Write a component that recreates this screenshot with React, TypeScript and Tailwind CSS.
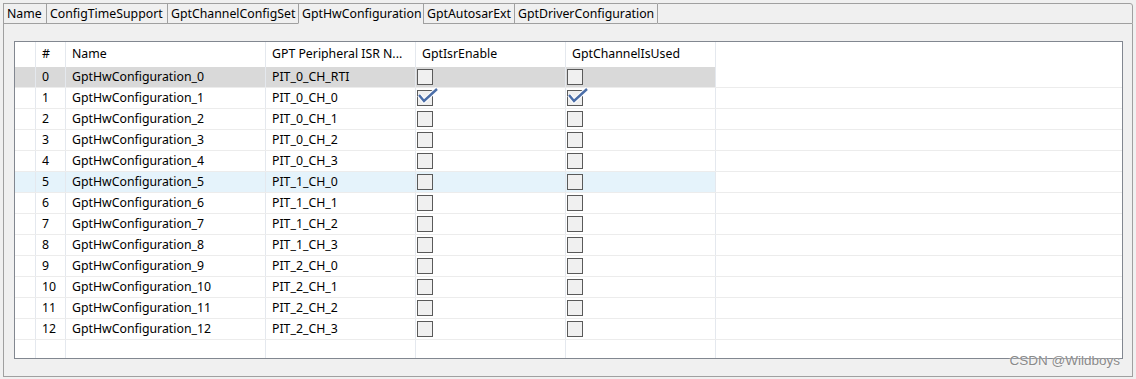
import React from 'react';

type Row = {
  id: number;
  name: string;
  isr: string;
  isrEnable: boolean;
  used: boolean;
};

const tabs = [
  { label: 'Name', w: 'w-[43px]' },
  { label: 'ConfigTimeSupport', w: 'w-[121px]' },
  { label: 'GptChannelConfigSet', w: 'w-[131px]' },
  { label: 'GptHwConfiguration', w: 'w-[125px]', active: true },
  { label: 'GptAutosarExt', w: 'w-[91px]' },
  { label: 'GptDriverConfiguration', w: 'w-[143px]' },
];

const isrNames = [
  'PIT_0_CH_RTI',
  'PIT_0_CH_0',
  'PIT_0_CH_1',
  'PIT_0_CH_2',
  'PIT_0_CH_3',
  'PIT_1_CH_0',
  'PIT_1_CH_1',
  'PIT_1_CH_2',
  'PIT_1_CH_3',
  'PIT_2_CH_0',
  'PIT_2_CH_1',
  'PIT_2_CH_2',
  'PIT_2_CH_3',
];

const rows: Row[] = isrNames.map((isr, i) => ({
  id: i,
  name: `GptHwConfiguration_${i}`,
  isr,
  isrEnable: i === 1,
  used: i === 1,
}));

function CheckBox({ checked }: { checked: boolean }) {
  return (
    <div className="relative w-[16px] h-[16px] border-[1.5px] border-[#5a5a5a] bg-[#f0f0f0]">
      {checked && (
        <svg className="absolute -left-[1px] -top-[4px]" width="22" height="17" viewBox="0 0 22 17">
          <path d="M2 8 L7 14 L20 2" fill="none" stroke="#ffffff" strokeWidth="4.5" />
          <path d="M2 8 L7 14 L20 2" fill="none" stroke="#4b6ea8" strokeWidth="2.4" />
        </svg>
      )}
    </div>
  );
}

export default function App() {
  const cell = 'h-full border-r border-[#e4e8ee] flex items-center';

  return (
    <div
      className="relative w-[1136px] h-[379px] bg-[#f0f0f0] pt-[3px] px-[3px] text-[12.3px] text-black overflow-hidden"
      style={{ fontFamily: '"Noto Sans", "Noto Sans CJK SC", sans-serif' }}
    >
      {/* Tabs */}
      <div className="flex h-[21px]">
        {tabs.map((t) => (
          <div
            key={t.label}
            className={`${t.w} h-full border-l border-t border-[#a0a0a0] pl-[3px] pt-[1px] flex items-center leading-none whitespace-nowrap ${
              t.active ? 'border-b border-b-[#f0f0f0]' : 'border-b'
            }`}
          >
            {t.label}
          </div>
        ))}
        <div className="flex-1 h-full border-l border-t border-r border-b border-[#a0a0a0] rounded-tr-[3px]" />
      </div>

      {/* Panel */}
      <div className="h-[353px] border-l border-r border-b border-[#a0a0a0] pt-[17px] pl-[10px] pr-[10px] pb-[17px]">
        <div className="w-[1109px] h-[318px] border border-[#828790] bg-white flex flex-col">
          {/* Header */}
          <div className="flex h-[25px] shrink-0">
            <div className={`${cell} w-[21px]`} />
            <div className={`${cell} w-[30px] pl-[6px]`}>#</div>
            <div className={`${cell} w-[200px] pl-[6px]`}>Name</div>
            <div className={`${cell} w-[150px] pl-[6px] whitespace-nowrap`}>GPT Peripheral ISR N...</div>
            <div className={`${cell} w-[150px] pl-[6px]`}>GptIsrEnable</div>
            <div className={`${cell} w-[150px] pl-[6px]`}>GptChannelIsUsed</div>
            <div className="flex-1" />
          </div>

          {rows.map((r) => (
            <div key={r.id} className="flex h-[21px] shrink-0 border-b border-[#ececec]">
              <div
                className={`flex h-full ${
                  r.id === 0 ? 'bg-[#d9d9d9]' : r.id === 5 ? 'bg-[#e5f3fb]' : ''
                }`}
              >
                <div className={`${cell} w-[21px]`} />
                <div className={`${cell} w-[30px] pl-[6px] pt-[1px]`}>{r.id}</div>
                <div className={`${cell} w-[200px] pl-[6px] pt-[1px]`}>{r.name}</div>
                <div className={`${cell} w-[150px] pl-[6px] pt-[1px]`}>{r.isr}</div>
                <div className={`${cell} w-[150px] pl-[1px]`}>
                  <CheckBox checked={r.isrEnable} />
                </div>
                <div className={`${cell} w-[150px] pl-[1px]`}>
                  <CheckBox checked={r.used} />
                </div>
              </div>
              <div className="flex-1" />
            </div>
          ))}

          {/* Empty trailing row */}
          <div className="flex flex-1">
            <div className={`${cell} w-[21px]`} />
            <div className={`${cell} w-[30px]`} />
            <div className={`${cell} w-[200px]`} />
            <div className={`${cell} w-[150px]`} />
            <div className={`${cell} w-[150px]`} />
            <div className={`${cell} w-[150px]`} />
            <div className="flex-1" />
          </div>
        </div>
      </div>

      {/* Watermark */}
      <div
        className="absolute right-[16px] top-[354px] text-[13.5px] text-[#8a8a8a] leading-none"
        style={{ fontFamily: '"Liberation Sans", Arial, sans-serif', textShadow: '0 0 2px #ffffff' }}
      >
        CSDN @Wildboys
      </div>
    </div>
  );
}
